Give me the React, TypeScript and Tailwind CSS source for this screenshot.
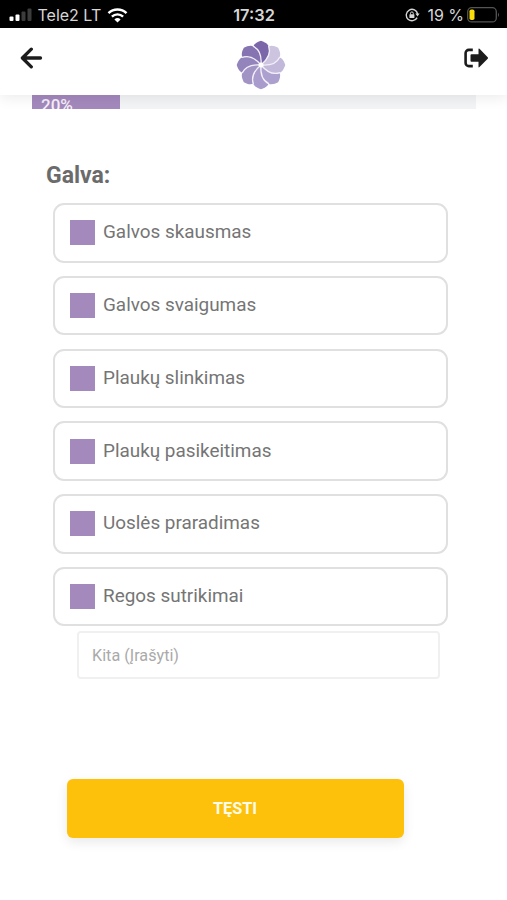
import React, { useState } from "react";

const symptoms = [
  "Galvos skausmas",
  "Galvos svaigumas",
  "Plaukų slinkimas",
  "Plaukų pasikeitimas",
  "Uoslės praradimas",
  "Regos sutrikimai",
];

// clockwise, starting from the top petal
const petalColors = [
  "#7c66aa",
  "#cdc4e0",
  "#c1b8da",
  "#aca0ce",
  "#a99bcb",
  "#a194c5",
  "#9384bb",
  "#8673b2",
];

const StatusBar = () => (
  <div className="flex h-7 shrink-0 items-center bg-black font-['Inter',sans-serif] text-[#d6d6d6]">
    <div className="flex flex-1 items-center pt-[2px] pl-[9px]">
      <svg width="24" height="14" viewBox="0 0 24 14">
        <rect x="0.5" y="8.5" width="4" height="4.5" rx="1" fill="#fff" />
        <rect x="6.5" y="6.5" width="4" height="6.5" rx="1" fill="#fff" />
        <rect x="12.5" y="3.5" width="4" height="9.5" rx="1" fill="#3c3c3c" />
        <rect x="18.5" y="0.5" width="4" height="12.5" rx="1" fill="#3c3c3c" />
      </svg>
      <span className="ml-[4.5px] w-[62px] text-[16px] leading-none whitespace-nowrap">
        Tele2 LT
      </span>
      <svg className="ml-[7px]" width="21" height="15" viewBox="0 0 21 15" fill="none">
        <path d="M1.5 5.2a13 13 0 0 1 18 0" stroke="#fff" strokeWidth="2.5" />
        <path d="M4.9 8.7a8 8 0 0 1 11.2 0" stroke="#fff" strokeWidth="2.4" />
        <path d="M10.5 14.6 7.4 11.4a4.5 4.5 0 0 1 6.2 0Z" fill="#fff" />
      </svg>
    </div>
    <span className="mr-[1px] pt-[2px] text-[16.4px] leading-none font-semibold">
      17:32
    </span>
    <div className="flex flex-1 items-center justify-end pt-[2px] pr-[7px]">
      <svg width="15" height="14" viewBox="0 0 15 14" fill="none">
        <path
          d="M12.1 9.6A5.7 5.7 0 1 1 12.6 6"
          stroke="#d6d6d6"
          strokeWidth="1.4"
        />
        <path d="M10.4 5.6h4.2l-2.1 3Z" fill="#d6d6d6" />
        <rect x="4.4" y="6.2" width="5" height="3.9" rx="0.6" fill="#d6d6d6" />
        <path d="M5.5 6.5V5.3a1.4 1.4 0 0 1 2.8 0v1.2" stroke="#d6d6d6" />
      </svg>
      <span className="ml-[7px] text-[16px] leading-none whitespace-nowrap">
        19 %
      </span>
      <svg className="ml-[3px]" width="33" height="16" viewBox="0 0 33 16">
        <rect
          x="0.7"
          y="0.7"
          width="28.6"
          height="14.2"
          rx="4"
          fill="none"
          stroke="#555"
          strokeWidth="1.3"
        />
        <rect x="2.5" y="2.5" width="5" height="10.5" rx="1.8" fill="#fbdd0b" />
        <path d="M31 5.5q2 2.3 0 4.6Z" fill="#555" />
      </svg>
    </div>
  </div>
);

const Logo = () => (
  <svg width="50" height="50" viewBox="-25 -25 50 50">
    {petalColors.map((color, idx) => (
      <path
        key={color}
        d="M0 0C6 -5 10.5 -11 7.8 -18.2C7 -21.5 3.5 -23 0 -24.3C-3.5 -23.2 -6.8 -21.5 -7.6 -18.6C-3 -17 -0.5 -12 0 0Z"
        transform={`rotate(${idx * 45})`}
        fill={color}
      />
    ))}
    {petalColors.map((color, idx) => (
      <path
        key={color}
        d="M0 0C6 -5 10.5 -11 7.6 -19"
        transform={`rotate(${idx * 45})`}
        fill="none"
        stroke="#f3effa"
        strokeWidth="1.3"
      />
    ))}
    <circle r="2.5" fill="#fff" />
  </svg>
);

const Header = () => (
  <header className="relative z-10 flex h-[67px] shrink-0 items-center justify-between bg-white pr-[18px] pl-[20px] shadow-[0_2px_14px_rgba(0,0,0,0.09)]">
    <button className="mb-[7px] w-[26px]" aria-label="Atgal">
      <svg width="23" height="22" viewBox="0 0 23 22" fill="none">
        <path
          d="M11.3 2.2 2.4 11l8.9 8.8M3 11h17.5"
          stroke="#1c1c1c"
          strokeWidth="3.3"
          strokeLinecap="round"
          strokeLinejoin="round"
        />
      </svg>
    </button>
    <div className="mt-[7px] ml-[12.5px]">
      <Logo />
    </div>
    <button className="mb-[7px]" aria-label="Atsijungti">
      <svg width="26" height="22" viewBox="0 0 26 22" fill="none">
        <path
          d="M9.8 2.9H5.8a3.2 3.2 0 0 0-3.2 3.2v9.8a3.2 3.2 0 0 0 3.2 3.2h4"
          stroke="#1c1c1c"
          strokeWidth="2.6"
        />
        <path
          d="M8.5 7.2h7V2.2q0-1.2 1-.4l8.2 8.4q.7.8 0 1.5l-8.2 8.4q-1 .8-1-.4v-5h-7q-1 0-1-1V8.2q0-1 1-1Z"
          fill="#1c1c1c"
        />
      </svg>
    </button>
  </header>
);

function App() {
  const [other, setOther] = useState("");

  return (
    <div className="flex h-[900px] flex-col overflow-hidden bg-white font-['Roboto',sans-serif]">
      <StatusBar />
      <Header />
      <div className="mr-[31px] ml-[32px] flex h-[14px] shrink-0 overflow-hidden bg-[#f3f4f5]">
        <div className="w-[88px] bg-[#a489bd] pl-[9px] text-[17px] leading-[21px] font-medium text-[#f6f0fa]">
          20%
        </div>
      </div>

      <main className="flex flex-col">
        <h3 className="mt-[51px] ml-[46px] text-[23px] leading-[32px] font-bold text-[#6b6b6b]">
          Galva:
        </h3>
        <div className="mt-[11px] ml-[53px] flex w-[395px] flex-col gap-[13.3px]">
          {symptoms.map((symptom) => (
            <div
              key={symptom}
              className="flex h-[59.5px] items-center rounded-[11px] border-2 border-[#e0e0e0] pl-[15px]"
            >
              <div className="size-[25px] shrink-0 bg-[#a489bd]" />
              <span className="ml-[8px] -mt-[1px] text-[18.9px] leading-[24px] text-[#757575]">
                {symptom}
              </span>
            </div>
          ))}
        </div>
        <input
          className="mt-[5px] ml-[77px] h-[48px] w-[363px] rounded-[4px] border-2 border-[#f0f0f0] pl-[13px] text-[16.2px] text-[#757575] outline-none placeholder:text-[#aaaaaa]"
          placeholder="Kita (Įrašyti)"
          value={other}
          onChange={(e) => setOther(e.target.value)}
        />
        <button className="mt-[100px] ml-[67px] h-[59px] w-[337px] rounded-[6px] bg-[#fec10b] pr-[1px] text-[16.3px] font-bold text-[#fffbea] shadow-[0_4px_12px_rgba(0,0,0,0.09)]">
          TĘSTI
        </button>
      </main>
    </div>
  );
}

export default App;
